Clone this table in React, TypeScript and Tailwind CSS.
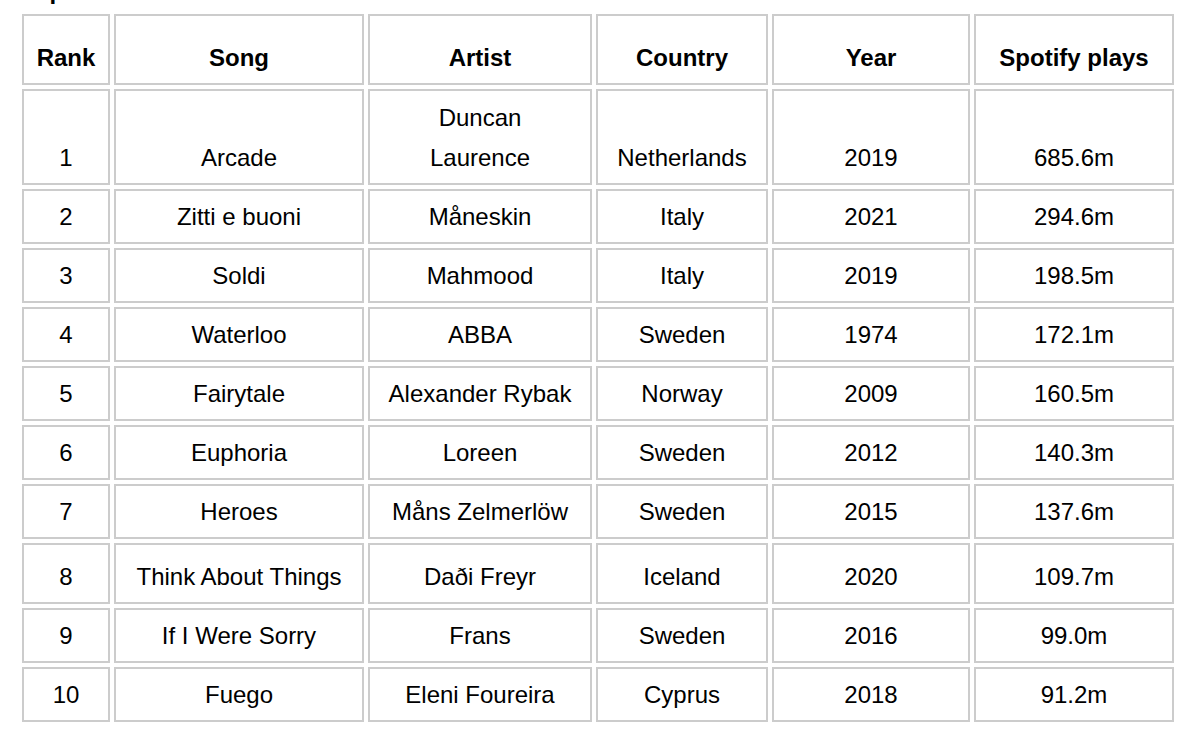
import React from "react";

const rows: { r: string; s: string; a: React.ReactNode; c: string; y: string; p: string; h: string }[] = [
  { r: "1", s: "Arcade", a: <>Duncan<br />Laurence</>, c: "Netherlands", y: "2019", p: "685.6m", h: "h-[96px]" },
  { r: "2", s: "Zitti e buoni", a: "Måneskin", c: "Italy", y: "2021", p: "294.6m", h: "h-[55px]" },
  { r: "3", s: "Soldi", a: "Mahmood", c: "Italy", y: "2019", p: "198.5m", h: "h-[55px]" },
  { r: "4", s: "Waterloo", a: "ABBA", c: "Sweden", y: "1974", p: "172.1m", h: "h-[55px]" },
  { r: "5", s: "Fairytale", a: "Alexander Rybak", c: "Norway", y: "2009", p: "160.5m", h: "h-[55px]" },
  { r: "6", s: "Euphoria", a: "Loreen", c: "Sweden", y: "2012", p: "140.3m", h: "h-[55px]" },
  { r: "7", s: "Heroes", a: "Måns Zelmerlöw", c: "Sweden", y: "2015", p: "137.6m", h: "h-[55px]" },
  { r: "8", s: "Think About Things", a: "Daði Freyr", c: "Iceland", y: "2020", p: "109.7m", h: "h-[61px]" },
  { r: "9", s: "If I Were Sorry", a: "Frans", c: "Sweden", y: "2016", p: "99.0m", h: "h-[55px]" },
  { r: "10", s: "Fuego", a: "Eleni Foureira", c: "Cyprus", y: "2018", p: "91.2m", h: "h-[55px]" },
];

const cell = "border-2 border-[#cccccc] px-0 pb-[5px] pt-0 align-bottom text-center leading-[40px] whitespace-nowrap";

export default function App() {
  return (
    <div className="bg-white text-black min-h-[730px] text-[24px]" style={{ fontFamily: '"Liberation Sans", Arial, Helvetica, sans-serif' }}>
      <div className="h-[10px] overflow-hidden pl-[22px]">
        <h2 className="mt-[-21px] text-[24px] font-bold leading-[24px]">Top 10</h2>
      </div>
      <table className="ml-[18px] w-[1160px] table-fixed border-separate border-spacing-[4px]">
        <thead>
          <tr className="h-[71px]">
            <th className={`${cell} w-[88px] font-bold`}>Rank</th>
            <th className={`${cell} w-[250px] font-bold`}>Song</th>
            <th className={`${cell} w-[224px] font-bold`}>Artist</th>
            <th className={`${cell} w-[172px] font-bold`}>Country</th>
            <th className={`${cell} w-[198px] font-bold`}>Year</th>
            <th className={`${cell} w-[200px] font-bold`}>Spotify plays</th>
          </tr>
        </thead>
        <tbody>
          {rows.map((row) => (
            <tr key={row.r} className={row.h}>
              <td className={cell}>{row.r}</td>
              <td className={cell}>{row.s}</td>
              <td className={cell}>{row.a}</td>
              <td className={cell}>{row.c}</td>
              <td className={cell}>{row.y}</td>
              <td className={cell}>{row.p}</td>
            </tr>
          ))}
        </tbody>
      </table>
    </div>
  );
}
